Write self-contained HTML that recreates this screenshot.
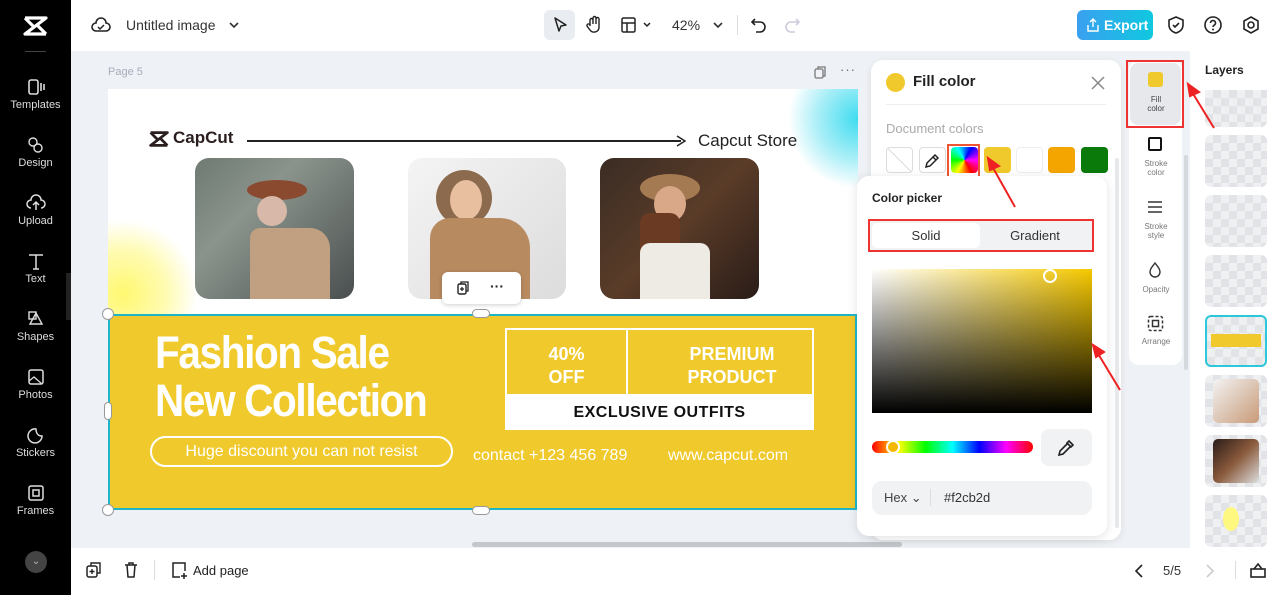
<!DOCTYPE html>
<html><head><meta charset="utf-8">
<style>
*{box-sizing:border-box;margin:0;padding:0}
body{width:1280px;height:595px;overflow:hidden;background:#fff;font-family:"Liberation Sans",sans-serif;position:relative}
.abs{position:absolute}
.side{left:0;top:0;width:71px;height:595px;background:#000}
.si{position:absolute;left:0;width:71px;text-align:center;color:#ddd;font-size:11px}
.si svg{display:block;margin:0 auto 3px}
.top{left:71px;top:0;width:1209px;height:51px;background:#fff}
.canvas{left:71px;top:51px;width:1119px;height:497px;background:#eef1f5}
.bottom{left:71px;top:548px;width:1209px;height:47px;background:#fff}
.photo{position:absolute;border-radius:14px;overflow:hidden}
.chk{background-color:#eef0f2;background-image:linear-gradient(45deg,#e1e3e6 25%,transparent 25%,transparent 75%,#e1e3e6 75%),linear-gradient(45deg,#e1e3e6 25%,transparent 25%,transparent 75%,#e1e3e6 75%);background-size:16px 16px;background-position:0 0,8px 8px}
.lay{position:absolute;left:1205px;width:62px;height:52px;border-radius:6px;overflow:hidden}
.tool{position:absolute;left:1130px;width:52px;text-align:center;font-size:8px;color:#777;line-height:9px}
.sw{position:absolute;top:147px;width:27px;height:26px;border-radius:4px}
.handle{position:absolute;width:10px;height:10px;border-radius:50%;background:#fff;border:1px solid #999}
</style></head><body>

<div class="abs side"></div>
<svg class="abs" style="left:23px;top:16px" width="25" height="20" viewBox="0 0 25 20"><path d="M2 2h21L2 18h21M2 2l8 8M23 18l-8-8" stroke="#fff" stroke-width="3.2" fill="none" stroke-linejoin="round"/></svg>
<div class="abs" style="left:25px;top:51px;width:21px;height:1px;background:#444"></div>
<div class="si" style="top:78px"><svg width="20" height="18"><rect x="3" y="2" width="9" height="14" rx="2" fill="none" stroke="#ddd" stroke-width="1.6"/><path d="M15 5v8M18 6v6" stroke="#ddd" stroke-width="1.6"/></svg>Templates</div>
<div class="si" style="top:136px"><svg width="20" height="18"><circle cx="7" cy="6" r="4" fill="none" stroke="#ddd" stroke-width="1.4"/><circle cx="12" cy="12" r="4" fill="none" stroke="#ddd" stroke-width="1.4"/></svg>Design</div>
<div class="si" style="top:194px"><svg width="20" height="18"><path d="M5 14a4 4 0 0 1 0-8 5 5 0 0 1 10 0 4 4 0 0 1 0 8M10 16V9M7 11l3-3 3 3" fill="none" stroke="#ddd" stroke-width="1.5"/></svg>Upload</div>
<div class="si" style="top:252px;font-size:11px"><svg width="20" height="18"><path d="M3 3h14M10 3v14M7 17h6" stroke="#ddd" stroke-width="1.5"/></svg>Text</div>
<div class="si" style="top:310px"><svg width="20" height="18"><path d="M10 3l6 11H4z" fill="none" stroke="#ddd" stroke-width="1.4"/><rect x="3" y="2" width="7" height="7" fill="none" stroke="#ddd" stroke-width="1.4"/></svg>Shapes</div>
<div class="si" style="top:368px"><svg width="20" height="18"><rect x="3" y="2" width="14" height="14" rx="2" fill="none" stroke="#ddd" stroke-width="1.5"/><path d="M3 13l5-4 8 7" fill="none" stroke="#ddd" stroke-width="1.3"/></svg>Photos</div>
<div class="si" style="top:426px"><svg width="20" height="18"><path d="M16 10a7 7 0 1 1-6-7c0 4 2 7 6 7z" fill="none" stroke="#ddd" stroke-width="1.5"/></svg>Stickers</div>
<div class="si" style="top:484px"><svg width="20" height="18"><rect x="3" y="2" width="14" height="14" rx="2" fill="none" stroke="#ddd" stroke-width="1.5"/><rect x="7" y="6" width="6" height="6" fill="none" stroke="#ddd" stroke-width="1.5"/></svg>Frames</div>
<div class="abs" style="left:25px;top:551px;width:22px;height:22px;border-radius:50%;background:#444;color:#bbb;font-size:10px;text-align:center;line-height:22px">⌄</div>
<div class="abs" style="left:66px;top:273px;width:11px;height:47px;background:#222;border-radius:0 5px 5px 0"></div>

<div class="abs top"></div>
<svg class="abs" style="left:91px;top:16px" width="20" height="18"><path d="M5 15a4 4 0 0 1 0-8 5 5 0 0 1 10 0 4 4 0 0 1 0 8z" fill="none" stroke="#222" stroke-width="1.6"/><path d="M7 11l2 2 4-4" fill="none" stroke="#222" stroke-width="1.5"/></svg>
<div class="abs" style="left:126px;top:17px;font-size:14px;color:#333">Untitled image</div>
<svg class="abs" style="left:228px;top:20px" width="12" height="10"><path d="M2 3l4 4 4-4" stroke="#333" stroke-width="1.6" fill="none"/></svg>
<div class="abs" style="left:544px;top:10px;width:31px;height:30px;border-radius:6px;background:#e9ecf0"></div>
<svg class="abs" style="left:552px;top:16px" width="16" height="18"><path d="M3 2l11 7-5 1-2 5z" fill="none" stroke="#222" stroke-width="1.5" stroke-linejoin="round"/></svg>
<svg class="abs" style="left:585px;top:15px" width="18" height="20"><path d="M5 11V5a1.5 1.5 0 0 1 3 0v4V3a1.5 1.5 0 0 1 3 0v6V4a1.5 1.5 0 0 1 3 0v9a5 5 0 0 1-9 2l-3-4a1.5 1.5 0 0 1 3-1" fill="none" stroke="#222" stroke-width="1.4"/></svg>
<svg class="abs" style="left:620px;top:16px" width="36" height="18"><rect x="2" y="2" width="13" height="14" rx="1.5" fill="none" stroke="#222" stroke-width="1.5"/><path d="M2 7h13M7 7v9" stroke="#222" stroke-width="1.5"/><path d="M24 7l3 3 3-3" stroke="#222" stroke-width="1.5" fill="none"/></svg>
<div class="abs" style="left:672px;top:17px;font-size:14px;color:#333">42%</div>
<svg class="abs" style="left:712px;top:20px" width="12" height="10"><path d="M2 3l4 4 4-4" stroke="#333" stroke-width="1.6" fill="none"/></svg>
<div class="abs" style="left:737px;top:15px;width:1px;height:20px;background:#ddd"></div>
<svg class="abs" style="left:750px;top:15px" width="18" height="20"><path d="M5 4L2 7l3 3M2 7h8a5 5 0 0 1 0 10H6" fill="none" stroke="#222" stroke-width="1.6"/></svg>
<svg class="abs" style="left:783px;top:15px" width="18" height="20"><path d="M13 4l3 3-3 3M16 7H8a5 5 0 0 0 0 10h4" fill="none" stroke="#ccd" stroke-width="1.6"/></svg>
<div class="abs" style="left:1077px;top:10px;width:76px;height:30px;border-radius:6px;background:linear-gradient(90deg,#3aa0f0,#10c8e0);color:#fff;font-weight:bold;font-size:14px;line-height:30px;padding-left:27px">Export</div>
<svg class="abs" style="left:1086px;top:17px" width="14" height="16"><path d="M7 10V2M4 5l3-3 3 3M2 8v6h10V8" fill="none" stroke="#fff" stroke-width="1.4"/></svg>
<svg class="abs" style="left:1166px;top:15px" width="20" height="20"><path d="M10 2l7 3v5c0 4-3 7-7 8-4-1-7-4-7-8V5z" fill="none" stroke="#222" stroke-width="1.6"/><path d="M7 10l2 2 4-4" fill="none" stroke="#222" stroke-width="1.6"/></svg>
<svg class="abs" style="left:1203px;top:15px" width="20" height="20"><circle cx="10" cy="10" r="8" fill="none" stroke="#222" stroke-width="1.6"/><path d="M7.5 8a2.5 2.5 0 1 1 3.5 2.3c-.7.4-1 .9-1 1.7" fill="none" stroke="#222" stroke-width="1.6"/><circle cx="10" cy="14.5" r="1" fill="#222"/></svg>
<svg class="abs" style="left:1241px;top:15px" width="20" height="20"><path d="M10 2l7 4v8l-7 4-7-4V6z" fill="none" stroke="#222" stroke-width="1.6"/><circle cx="10" cy="10" r="3" fill="none" stroke="#222" stroke-width="1.6"/></svg>

<div class="abs canvas"></div>
<div class="abs" style="left:108px;top:66px;font-size:11px;color:#aab">Page 5</div>
<svg class="abs" style="left:813px;top:65px" width="14" height="15"><rect x="2" y="4" width="8" height="9" rx="1.5" fill="none" stroke="#777" stroke-width="1.3"/><path d="M5 4V2h7v9h-2" fill="none" stroke="#777" stroke-width="1.3"/></svg>
<div class="abs" style="left:840px;top:62px;font-size:13px;color:#666;letter-spacing:1px">···</div>

<!-- page -->
<div class="abs" style="left:108px;top:89px;width:750px;height:225px;background:#fff;overflow:hidden">
 <div class="abs" style="left:-60px;top:130px;width:150px;height:150px;border-radius:50%;background:radial-gradient(circle,#fff870 0%,#fffbb0 40%,rgba(255,255,255,0) 70%)"></div>
 <div class="abs" style="left:680px;top:-40px;width:140px;height:140px;border-radius:50%;background:radial-gradient(circle,#3fdcf0 0%,#a8eef7 40%,rgba(255,255,255,0) 70%)"></div>
</div>
<svg class="abs" style="left:149px;top:131px" width="20" height="16" viewBox="0 0 25 20"><path d="M2 2h21L2 18h21M2 2l8 8M23 18l-8-8" stroke="#2a1e1e" stroke-width="3.4" fill="none" stroke-linejoin="round"/></svg>
<div class="abs" style="left:173px;top:128px;font-size:17px;font-weight:bold;color:#2a1e1e">CapCut</div>
<div class="abs" style="left:247px;top:140px;width:434px;height:2px;background:#222"></div>
<svg class="abs" style="left:676px;top:135px" width="10" height="12"><path d="M1 1l8 5-8 5" fill="none" stroke="#222" stroke-width="1.5"/></svg>
<div class="abs" style="left:698px;top:131px;font-size:17px;color:#222">Capcut Store</div>

<div class="photo" style="left:195px;top:158px;width:159px;height:141px;background:linear-gradient(135deg,#6f7a72 0%,#8a948c 35%,#4a4f4f 100%)">
 <div class="abs" style="left:52px;top:22px;width:60px;height:20px;border-radius:50%;background:#8a4a30"></div>
 <div class="abs" style="left:62px;top:38px;width:30px;height:30px;border-radius:50%;background:#d8b8a8"></div>
 <div class="abs" style="left:55px;top:70px;width:80px;height:80px;background:#c0a080;border-radius:10px 20px 0 0"></div>
</div>
<div class="photo" style="left:408px;top:158px;width:158px;height:141px;background:linear-gradient(135deg,#f4f4f4,#dcdcdc)">
 <div class="abs" style="left:28px;top:12px;width:56px;height:56px;border-radius:50%;background:#8c6a4e"></div>
 <div class="abs" style="left:42px;top:22px;width:32px;height:40px;border-radius:50%;background:#e8c0a0"></div>
 <div class="abs" style="left:22px;top:60px;width:100px;height:90px;background:#b88a60;border-radius:20px 30px 0 0"></div>
</div>
<div class="photo" style="left:600px;top:158px;width:159px;height:141px;background:linear-gradient(135deg,#3a2c24,#5a3c28 50%,#2a1c18)">
 <div class="abs" style="left:40px;top:16px;width:60px;height:28px;border-radius:50%;background:#a47a52"></div>
 <div class="abs" style="left:54px;top:28px;width:32px;height:36px;border-radius:50%;background:#d8a888"></div>
 <div class="abs" style="left:40px;top:55px;width:40px;height:70px;background:#6a3a22;border-radius:10px"></div>
 <div class="abs" style="left:40px;top:85px;width:70px;height:60px;background:#eeeae4;border-radius:10px 10px 0 0"></div>
</div>
<div class="abs" style="left:442px;top:272px;width:79px;height:32px;border-radius:6px;background:#fff;box-shadow:0 1px 4px rgba(0,0,0,.2)"></div>
<svg class="abs" style="left:456px;top:280px" width="16" height="16"><rect x="2" y="4" width="8" height="10" rx="1.5" fill="none" stroke="#222" stroke-width="1.4"/><path d="M5 4V2h7v9h-2M6 7v4M4 9h4" fill="none" stroke="#222" stroke-width="1.3"/></svg>
<div class="abs" style="left:490px;top:278px;font-size:14px;font-weight:bold;color:#222">···</div>

<!-- banner -->
<div class="abs" style="left:108px;top:314px;width:749px;height:196px;background:#f0c92c;border:2px solid #1fb5c9"></div>
<div class="abs" style="left:155px;top:329px;font-size:45px;font-weight:bold;color:#fff;letter-spacing:-1.5px;line-height:48px;transform:scaleX(.9);transform-origin:0 0;white-space:nowrap">Fashion Sale<br>New Collection</div>
<div class="abs" style="left:150px;top:436px;width:303px;height:31px;border:2px solid #fff;border-radius:16px;color:#fff;font-size:16px;text-align:center;line-height:27px">Huge discount you can not resist</div>
<div class="abs" style="left:505px;top:328px;width:309px;height:102px;border:2px solid #fff"></div>
<div class="abs" style="left:626px;top:328px;width:2px;height:66px;background:#fff"></div>
<div class="abs" style="left:505px;top:394px;width:309px;height:36px;background:#fff;font-weight:bold;font-size:16px;color:#111;text-align:center;line-height:38px;letter-spacing:.5px">EXCLUSIVE OUTFITS</div>
<div class="abs" style="left:507px;top:343px;width:119px;text-align:center;color:#fff;font-weight:bold;font-size:18px;line-height:23px">40%<br>OFF</div>
<div class="abs" style="left:628px;top:343px;width:208px;text-align:center;color:#fff;font-weight:bold;font-size:18px;line-height:23px">PREMIUM<br>PRODUCT</div>
<div class="abs" style="left:473px;top:447px;font-size:16px;color:#fff">contact +123 456 789</div>
<div class="abs" style="left:668px;top:447px;font-size:16px;color:#fff">www.capcut.com</div>
<div class="handle" style="left:102px;top:308px;width:12px;height:12px"></div>
<div class="handle" style="left:102px;top:504px;width:12px;height:12px"></div>
<div class="handle" style="left:472px;top:309px;width:18px;height:9px;border-radius:5px"></div>
<div class="handle" style="left:472px;top:506px;width:18px;height:9px;border-radius:5px"></div>
<div class="handle" style="left:104px;top:402px;width:8px;height:18px;border-radius:4px"></div>
<div class="abs" style="left:472px;top:542px;width:430px;height:5px;border-radius:3px;background:#c4c8cc"></div>

<!-- fill color panel -->
<div class="abs" style="left:871px;top:60px;width:250px;height:480px;background:#fff;border-radius:12px;box-shadow:0 2px 8px rgba(0,0,0,.08)"></div>
<div class="abs" style="left:886px;top:73px;width:19px;height:19px;border-radius:50%;background:#f0c92c"></div>
<div class="abs" style="left:913px;top:73px;font-size:15px;font-weight:bold;color:#222">Fill color</div>
<svg class="abs" style="left:1090px;top:75px" width="16" height="16"><path d="M2 2l12 12M14 2L2 14" stroke="#888" stroke-width="1.5"/></svg>
<div class="abs" style="left:886px;top:104px;width:220px;height:1px;background:#eee"></div>
<div class="abs" style="left:886px;top:121px;font-size:13px;color:#aaa">Document colors</div>
<div class="sw" style="left:886px;border:1px solid #ddd;background:linear-gradient(45deg,#fff 48%,#ccc 50%,#fff 52%)"></div>
<div class="sw" style="left:919px;border:1px solid #ddd;background:#fff"></div>
<svg class="abs" style="left:924px;top:152px" width="17" height="17"><path d="M11 3l3 3-2 2-3-3zM9 5l-6 6-1 4 4-1 6-6" fill="none" stroke="#222" stroke-width="1.5"/></svg>
<div class="sw" style="left:951px;background:conic-gradient(from 90deg,#f0f,#f00,#ff0,#0f0,#0ff,#00f,#f0f)"></div>
<div class="abs" style="left:947px;top:144px;width:33px;height:41px;border:2px solid #e53"></div>
<div class="sw" style="left:984px;background:#f0c92c"></div>
<div class="sw" style="left:1016px;border:1px solid #eee;background:#fff"></div>
<div class="sw" style="left:1048px;background:#f5a500"></div>
<div class="sw" style="left:1081px;background:#0a7a0a"></div>
<div class="abs" style="left:1115px;top:158px;width:4px;height:370px;border-radius:2px;background:#e6e8ea"></div>

<!-- color picker -->
<div class="abs" style="left:857px;top:176px;width:250px;height:360px;background:#fff;border-radius:12px;box-shadow:0 2px 10px rgba(0,0,0,.12)"></div>
<div class="abs" style="left:872px;top:191px;font-size:12px;font-weight:bold;color:#222">Color picker</div>
<div class="abs" style="left:868px;top:219px;width:226px;height:33px;border:2px solid #e33;background:#f0f2f4"></div>
<div class="abs" style="left:872px;top:223px;width:108px;height:25px;background:#fff;border-radius:5px;font-size:13px;color:#333;text-align:center;line-height:25px">Solid</div>
<div class="abs" style="left:980px;top:223px;width:110px;height:25px;font-size:13px;color:#333;text-align:center;line-height:25px">Gradient</div>
<div class="abs" style="left:872px;top:269px;width:220px;height:144px;background:linear-gradient(to top,#000,rgba(0,0,0,0)),linear-gradient(to right,#fff,#f5c800)"></div>
<div class="abs" style="left:1043px;top:269px;width:14px;height:14px;border-radius:50%;border:2px solid #fff"></div>
<div class="abs" style="left:872px;top:441px;width:161px;height:12px;border-radius:6px;background:linear-gradient(90deg,#f00,#ff0,#0f0,#0ff,#00f,#f0f,#f00)"></div>
<div class="abs" style="left:886px;top:440px;width:14px;height:14px;border-radius:50%;border:2px solid #fff;background:#f5b800"></div>
<div class="abs" style="left:1041px;top:429px;width:51px;height:37px;border-radius:8px;background:#f0f2f4"></div>
<svg class="abs" style="left:1056px;top:438px" width="20" height="20"><path d="M13 3l4 4-2 2-4-4zM11 6l-7 7-1 4 4-1 7-7" fill="none" stroke="#222" stroke-width="1.6"/></svg>
<div class="abs" style="left:872px;top:481px;width:220px;height:34px;border-radius:10px;background:#f0f2f4"></div>
<div class="abs" style="left:884px;top:490px;font-size:13px;color:#444">Hex ⌄</div>
<div class="abs" style="left:930px;top:489px;width:1px;height:17px;background:#ddd"></div>
<div class="abs" style="left:944px;top:490px;font-size:13px;color:#333">#f2cb2d</div>

<!-- tool column -->
<div class="abs" style="left:1129px;top:60px;width:53px;height:305px;background:#fff;border-radius:10px"></div>
<div class="abs" style="left:1130px;top:63px;width:51px;height:62px;background:#e6e8eb;border-radius:8px"></div>
<div class="abs" style="left:1126px;top:60px;width:58px;height:68px;border:2px solid #e33"></div>
<div class="abs" style="left:1148px;top:72px;width:15px;height:15px;border-radius:3px;background:#f0c92c"></div>
<div class="tool" style="top:95px;color:#444">Fill<br>color</div>
<div class="abs" style="left:1148px;top:137px;width:14px;height:14px;border:2.5px solid #111;border-radius:2px"></div>
<div class="tool" style="top:159px">Stroke<br>color</div>
<svg class="abs" style="left:1147px;top:199px" width="16" height="16"><path d="M1 3h14M1 8h14M1 13h14" stroke="#333" stroke-width="1.6"/></svg>
<div class="tool" style="top:222px">Stroke<br>style</div>
<svg class="abs" style="left:1148px;top:262px" width="14" height="16"><path d="M7 1c3 4 5 6 5 9a5 5 0 0 1-10 0c0-3 2-5 5-9z" fill="none" stroke="#333" stroke-width="1.4"/></svg>
<div class="tool" style="top:285px">Opacity</div>
<svg class="abs" style="left:1147px;top:315px" width="17" height="17"><rect x="1.5" y="1.5" width="14" height="14" rx="2" fill="none" stroke="#333" stroke-width="1.5" stroke-dasharray="3 2"/><rect x="5.5" y="5.5" width="6" height="6" fill="none" stroke="#333" stroke-width="1.5"/></svg>
<div class="tool" style="top:337px">Arrange</div>
<div class="abs" style="left:1184px;top:155px;width:4px;height:215px;border-radius:2px;background:#d6d9dc"></div>

<!-- layers -->
<div class="abs" style="left:1190px;top:51px;width:90px;height:497px;background:#fff"></div>
<div class="abs" style="left:1205px;top:63px;font-size:12px;font-weight:bold;color:#222">Layers</div>
<div class="lay chk" style="top:90px;height:37px;border-radius:0 0 6px 6px"></div>
<div class="lay chk" style="top:135px"></div>
<div class="lay chk" style="top:195px"></div>
<div class="lay chk" style="top:255px"></div>
<div class="lay chk" style="top:315px;border:2px solid #2bc8dc"><div class="abs" style="left:4px;top:17px;width:50px;height:13px;background:#f0c92c"></div></div>
<div class="lay chk" style="top:375px"><div class="abs" style="left:8px;top:4px;width:46px;height:44px;border-radius:5px;background:linear-gradient(135deg,#f3f3f3,#c89a78)"></div></div>
<div class="lay chk" style="top:435px"><div class="abs" style="left:8px;top:4px;width:46px;height:44px;border-radius:5px;background:linear-gradient(135deg,#2a1c18,#8a5a3c,#ddd)"></div></div>
<div class="lay chk" style="top:495px"><div class="abs" style="left:18px;top:12px;width:16px;height:24px;border-radius:50%;background:#fff880"></div></div>

<!-- bottom bar -->
<div class="abs bottom"></div>
<svg class="abs" style="left:85px;top:561px" width="18" height="18"><rect x="2" y="5" width="10" height="11" rx="2" fill="none" stroke="#222" stroke-width="1.5"/><path d="M6 5V2h9v10h-3M7 8v5M4.5 10.5h5" fill="none" stroke="#222" stroke-width="1.4"/></svg>
<svg class="abs" style="left:122px;top:561px" width="18" height="18"><path d="M3 4h12M7 4V2h4v2M5 4l1 12h6l1-12" fill="none" stroke="#222" stroke-width="1.5"/></svg>
<div class="abs" style="left:154px;top:560px;width:1px;height:20px;background:#ddd"></div>
<svg class="abs" style="left:170px;top:561px" width="18" height="18"><path d="M10 16H3V2h12v8" fill="none" stroke="#222" stroke-width="1.5"/><path d="M14 12v6M11 15h6" stroke="#222" stroke-width="1.5"/></svg>
<div class="abs" style="left:193px;top:563px;font-size:13px;color:#222">Add page</div>
<svg class="abs" style="left:1133px;top:563px" width="12" height="16"><path d="M9 2L3 8l6 6" fill="none" stroke="#222" stroke-width="1.6"/></svg>
<div class="abs" style="left:1163px;top:563px;font-size:13px;color:#333">5/5</div>
<svg class="abs" style="left:1204px;top:563px" width="12" height="16"><path d="M3 2l6 6-6 6" fill="none" stroke="#ccc" stroke-width="1.6"/></svg>
<div class="abs" style="left:1235px;top:561px;width:1px;height:18px;background:#ddd"></div>
<svg class="abs" style="left:1249px;top:561px" width="18" height="18"><rect x="2" y="8" width="14" height="8" fill="none" stroke="#222" stroke-width="1.6"/><path d="M5 8l4-5 4 5" fill="none" stroke="#222" stroke-width="1.6"/></svg>

<!-- red arrows -->
<svg class="abs" style="left:0;top:0" width="1280" height="595">
 <g stroke="#e22" stroke-width="2" fill="#e22">
  <line x1="1015" y1="207" x2="992" y2="166"/><path d="M988 158l11 8-9 4z"/>
  <line x1="1120" y1="390" x2="1097" y2="352"/><path d="M1093 345l11 7-8 5z"/>
  <line x1="1214" y1="128" x2="1192" y2="92"/><path d="M1188 84l11 8-9 4z"/>
 </g>
</svg>
</body></html>
